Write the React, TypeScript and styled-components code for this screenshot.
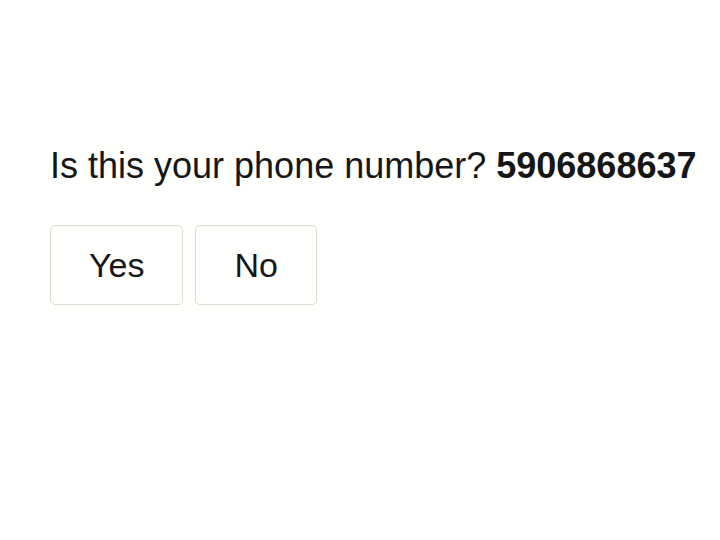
import React from 'react';
import styled, { createGlobalStyle } from 'styled-components';

const GlobalStyle = createGlobalStyle`
  body {
    margin: 0;
    background: #fffffe;
    font-family: "Liberation Sans", Arial, sans-serif;
    color: #161616;
  }
`;

const Page = styled.div`
  padding: 145px 50px 0;
`;

const Question = styled.p`
  margin: 0;
  font-size: 36px;
  line-height: 42px;
  white-space: nowrap;

  strong {
    font-weight: 700;
  }
`;

const Actions = styled.div`
  display: flex;
  gap: 12px;
  margin-top: 38px;
`;

const ChoiceButton = styled.button`
  height: 80px;
  padding: 0 38px;
  background: transparent;
  border: 1px solid #dcdcd4;
  border-radius: 5px;
  font-family: inherit;
  font-size: 34px;
  color: #161616;
  cursor: pointer;
`;

const App: React.FC = () => {
  return (
    <>
      <GlobalStyle />
      <Page>
        <Question>
          Is this your phone number? <strong>5906868637</strong>
        </Question>
        <Actions>
          <ChoiceButton>Yes</ChoiceButton>
          <ChoiceButton>No</ChoiceButton>
        </Actions>
      </Page>
    </>
  );
};

export default App;
